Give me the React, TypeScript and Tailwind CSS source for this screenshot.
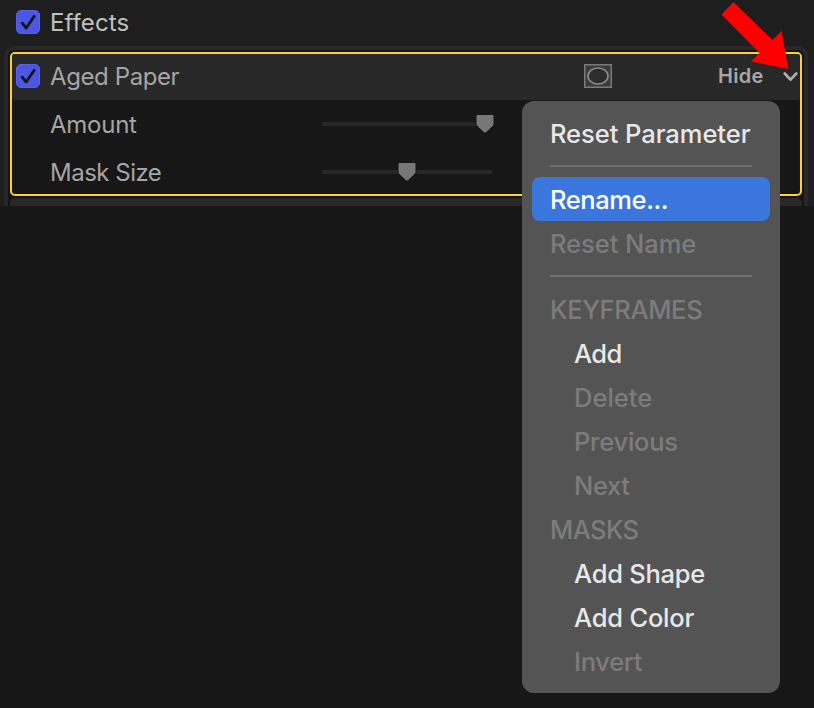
import React from "react";

const ink = "whitespace-nowrap leading-none";

function Checkbox() {
  return (
    <span className="flex size-6 shrink-0 items-center justify-center rounded-[5px] border border-[#5661ee] bg-[#4b56e3]">
      <svg width="22" height="22" viewBox="0 0 22 22" fill="none">
        <path d="M5.2 12.2 9.2 17 17.2 5.3" stroke="#15151c" strokeWidth="2.8" strokeLinecap="round" strokeLinejoin="round" />
      </svg>
    </span>
  );
}

function Slider({ label, spacing, value }: { label: string; spacing: string; value: number }) {
  return (
    <div className="flex h-12 items-center pl-[38px]">
      <span className={`${ink} ${spacing} w-[272px] pt-0.5 text-[24px] text-[#a5a5a5]`}>{label}</span>
      <div className="relative h-1 w-[170px] rounded-full bg-[#282828]">
        <svg className="absolute -top-2" style={{ left: value - 10 }} width="20" height="20" viewBox="0 0 20 20">
          <path d="M2.500 .5h15a1.500 1.500 0 0 1 1.500 1.500V10c0 .8-.3 1.400-.9 2L11.300 18.400c-.8.8-1.800.8-2.600 0L1.900 12c-.6-.6-.9-1.200-.9-2V2A1.500 1.500 0 0 1 2.500 .5Z" fill="#777" stroke="#171717" strokeWidth="1" />
        </svg>
      </div>
    </div>
  );
}

function Item({ label, tone = "text-[#e8e8e8] font-medium", indent, spacing = "tracking-[-0.2px]" }: { label: string; tone?: string; indent?: boolean; spacing?: string }) {
  return (
    <div className={`flex h-11 items-center pt-0.5 ${indent ? "pl-[52px]" : "pl-[28px]"}`}>
      <span className={`${ink} ${tone} ${spacing} text-[25.5px]`}>{label}</span>
    </div>
  );
}

function Separator() {
  return (
    <div className="flex h-[22px] items-center px-7">
      <div className="h-0.5 w-full bg-[#6f6f6f]" />
    </div>
  );
}

const dim = "text-[#7c7c7c] font-[450]";

export default function App() {
  return (
    <div className="relative h-[708px] w-[814px] overflow-hidden bg-[#171717] font-['Inter',sans-serif]">
      <section className="flex h-[206px] flex-col overflow-hidden bg-[#1e1e1e]">
        <header className="flex h-[46px] shrink-0 items-center gap-[10px] pb-0.5 pl-4">
          <Checkbox />
          <span className={`${ink} pt-0.5 text-[24px] tracking-[0.1px] text-[#c0c0c0]`}>Effects</span>
        </header>
        <div className="mr-[6px] ml-1 flex-1 rounded-t-[10px] border-x-4 border-t-4 border-[#282828] bg-[#151515] px-0.5 pt-0.5">
          <div className="h-36 overflow-hidden rounded-[5px] border-2 border-[#ffcf33] bg-[#171717]">
            <div className="flex h-[46px] items-center rounded-b-[3px] bg-[#282828] pb-0.5 pl-1">
              <Checkbox />
              <span className={`${ink} ml-[10px] pt-0.5 text-[24px] tracking-[-0.4px] text-[#a5a5a5]`}>Aged Paper</span>
              <svg className="mr-[106px] ml-auto shrink-0" width="28" height="24" viewBox="0 0 28 24" fill="none">
                <rect x=".75" y=".75" width="26.500" height="22.500" fill="#3b3b3b" stroke="#7b7b7b" strokeWidth="1.500" />
                <ellipse cx="14" cy="12" rx="10" ry="8" fill="#2d2d2d" stroke="#8c8c8c" strokeWidth="1.600" />
              </svg>
              <span className={`${ink} w-[46px] text-[20px] font-semibold tracking-[0.3px] text-[#a8a8a8]`}>Hide</span>
              <svg className="mr-px ml-[19px] shrink-0" width="16" height="12" viewBox="0 0 16 12" fill="none">
                <path d="m1.700 3.500 5.800 6.200 5.800-6.200" stroke="#b0b0b0" strokeWidth="2.600" strokeLinecap="round" strokeLinejoin="round" />
              </svg>
            </div>
            <Slider label="Amount" spacing="tracking-[-0.25px]" value={163} />
            <Slider label="Mask Size" spacing="tracking-[-0.5px]" value={85} />
          </div>
          <div className="mt-0.5 h-2 rounded-t-[5px] bg-[#282828]" />
        </div>
      </section>

      <nav className="absolute top-[101px] left-[522px] h-[592px] w-[258px] rounded-[12px] bg-[#545454] pt-[10px]">
        <Item label="Reset Parameter" spacing="tracking-[-0.05px]" />
        <Separator />
        <div className="mx-[10px] flex h-11 items-center rounded-[8px] bg-[#3b76dd] pt-0.5 pl-[18px]">
          <span className={`${ink} text-[25.5px] font-medium tracking-[-0.4px] text-white`}>Rename...</span>
        </div>
        <Item label="Reset Name" tone={dim} spacing="tracking-[-0.05px]" />
        <Separator />
        <Item label="KEYFRAMES" tone={dim} spacing="tracking-[-0.35px]" />
        <Item label="Add" indent spacing="tracking-[-0.6px]" />
        <Item label="Delete" tone={dim} indent spacing="tracking-[0px]" />
        <Item label="Previous" tone={dim} indent spacing="tracking-[-0.25px]" />
        <Item label="Next" tone={dim} indent spacing="tracking-[-0.4px]" />
        <Item label="MASKS" tone={dim} spacing="tracking-[-0.6px]" />
        <Item label="Add Shape" indent spacing="tracking-[-0.25px]" />
        <Item label="Add Color" indent spacing="tracking-[-0.2px]" />
        <Item label="Invert" tone={dim} indent spacing="tracking-[-0.3px]" />
      </nav>

      <svg className="absolute top-0 left-[720px]" width="74" height="72" viewBox="0 0 74 72">
        <path d="M13.500 2 52.500 40 61.500 31 68.500 69 31 61.500 39.500 53 1.500 14.500Z" fill="#ff0000" />
      </svg>
    </div>
  );
}
